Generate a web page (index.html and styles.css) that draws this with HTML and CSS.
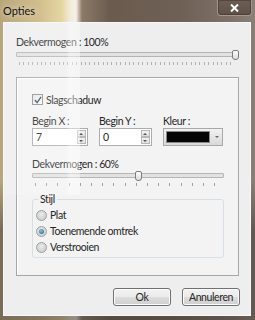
FILE: index.html
```html
<!DOCTYPE html>
<html>
<head>
<meta charset="utf-8">
<link rel="stylesheet" href="styles.css">
</head>
<body>
<div class="window">
  <div class="titlebar">
    <span class="title">Opties</span>
    <span class="close">
      <svg width="9" height="8" viewBox="0 0 9 8"><path d="M1 0.5 L8 7.5 M8 0.5 L1 7.5" stroke="#fff" stroke-width="2"/></svg>
    </span>
  </div>
  <div class="client">
    <div class="label top-label">Dekvermogen : 100%</div>
    <div class="slider wide">
      <div class="track"></div>
      <div class="thumb" style="left: 216px"></div>
      <div class="ticks fine"></div>
    </div>

    <div class="panel">
      <label class="check">
        <span class="box">
          <svg width="9" height="9" viewBox="0 0 9 9"><path d="M1 4.5 L3.5 7.5 L8 1" stroke="#3b4b68" stroke-width="1.6" fill="none"/></svg>
        </span>
        <span class="label">Slagschaduw</span>
      </label>

      <div class="fields">
        <div class="field">
          <div class="label">Begin X :</div>
          <div class="spin">
            <span class="val">7</span>
            <span class="arrows"><span class="up"></span><span class="down"></span></span>
          </div>
        </div>
        <div class="field">
          <div class="label">Begin Y :</div>
          <div class="spin short">
            <span class="val">0</span>
            <span class="arrows"><span class="up"></span><span class="down"></span></span>
          </div>
        </div>
        <div class="field">
          <div class="label">Kleur :</div>
          <div class="combo">
            <span class="swatch"></span>
            <span class="drop"></span>
          </div>
        </div>
      </div>

      <div class="label mid-label">Dekvermogen : 60%</div>
      <div class="slider narrow">
        <div class="track"></div>
        <div class="thumb" style="left: 103px"></div>
        <div class="ticks coarse"></div>
      </div>

      <fieldset class="group">
        <legend class="label">Stijl</legend>
        <label class="radio"><span class="dot"></span><span class="label">Plat</span></label>
        <label class="radio on"><span class="dot"></span><span class="label">Toenemende omtrek</span></label>
        <label class="radio"><span class="dot"></span><span class="label">Verstrooien</span></label>
      </fieldset>
    </div>

    <div class="buttons">
      <span class="btn">Ok</span>
      <span class="btn">Annuleren</span>
    </div>
  </div>
</div>
</body>
</html>
```
FILE: styles.css
```css
*, *::before, *::after {
  box-sizing: border-box;
}
html, body {
  margin: 0;
  padding: 0;
}
body {
  width: 255px;
  height: 320px;
  overflow: hidden;
  font-family: "Lato", "Noto Sans", sans-serif;
  font-size: 10.5px;
  letter-spacing: -0.4px;
  color: #262626;
}
.window {
  width: 255px;
  height: 320px;
  display: flex;
  flex-direction: column;
  background:
    linear-gradient(to bottom, rgba(0,0,0,0) 0, rgba(0,0,0,0) 180px, rgba(70,60,55,0.55) 230px),
    linear-gradient(to right, #b9a57a 0, #d2bf8f 40px, #e6d6a4 62px, #f1ecd8 70px, #f4f0e8 76px, #8c7a68 82px, #6b5b4f 110px, #6f6055 180px, #7e7168 230px, #8a8078 255px);
}
.titlebar {
  height: 22px;
  flex: none;
  display: flex;
  justify-content: space-between;
  align-items: flex-start;
  padding: 0 3px 0 3px;
}
.title {
  margin-top: 4px;
  font-size: 11px;
  letter-spacing: 0;
  color: #111;
  text-shadow: 0 0 6px rgba(255,255,240,0.9);
}
.close {
  width: 35px;
  height: 16px;
  border: 1px solid rgba(220,210,200,0.5);
  border-top: none;
  border-radius: 0 0 4px 4px;
  background: linear-gradient(#6d5e53, #5f5148);
  box-shadow: inset 0 0 0 1px rgba(40,30,25,0.35);
  display: flex;
  align-items: center;
  justify-content: center;
  padding-top: 1px;
}
.client {
  flex: 1;
  width: 248px;
  margin: 0 4px 4px 3px;
  background: #eeeeee;
  border: 1px solid #f8f8f8;
  display: flex;
  flex-direction: column;
  align-items: flex-start;
  padding: 12px 10px 0 12px;
  position: relative;
}
.client::before {
  content: "";
  position: absolute;
  left: 0;
  top: 0;
  width: 76px;
  height: 172px;
  background: linear-gradient(to right, rgba(255,255,255,0.12) 0, rgba(255,255,255,0.2) 62px, rgba(255,255,255,0.5) 66px, rgba(255,255,255,0.4) 75px);
  pointer-events: none;
  z-index: 2;
}
.label {
  line-height: 14px;
  white-space: nowrap;
}
.slider {
  position: relative;
  height: 17px;
  flex: none;
}
.slider.wide {
  margin-top: 1px;
  width: 222px;
}
.slider.narrow {
  width: 192px;
}
.track {
  position: absolute;
  left: 0;
  right: 0;
  top: 2px;
  height: 5px;
  border: 1px solid #b5b5b5;
  border-radius: 1px;
  background: #e2e2e2;
}
.thumb {
  position: absolute;
  top: 0;
  width: 7px;
  height: 10px;
  border: 1px solid #7c7c7c;
  border-radius: 2px 2px 3px 3px;
  background: linear-gradient(#fcfcfc, #dcdcdc);
}
.ticks {
  position: absolute;
  left: 3px;
  right: 3px;
  top: 12px;
  height: 3px;
}
.ticks.fine {
  background: repeating-linear-gradient(to right, #b0b0b0 0, #b0b0b0 1px, transparent 1px, transparent 4.4px);
}
.ticks.coarse {
  background: repeating-linear-gradient(to right, #a0a0a0 0, #a0a0a0 1px, transparent 1px, transparent 11.2px);
}
.panel {
  margin-top: 10px;
  width: 223px;
  height: 199px;
  flex: none;
  border: 1px solid #a6a6a6;
  background: #f3f3f3;
  box-shadow: inset 1px 1px 0 #ffffff;
  padding: 15px 0 0 15px;
  display: flex;
  flex-direction: column;
  align-items: flex-start;
}
.check {
  display: flex;
  align-items: center;
  gap: 3px;
  height: 13px;
}
.box {
  width: 11px;
  height: 11px;
  border: 1px solid #8e8f8f;
  background: linear-gradient(135deg, #e5e5e5, #fbfbfb);
  display: flex;
  align-items: center;
  justify-content: center;
}
.box svg {
  width: 8px;
  height: 8px;
}
.fields {
  display: flex;
  margin-top: 8px;
  gap: 11px;
}
.field {
  display: flex;
  flex-direction: column;
}
.spin {
  width: 56px;
  height: 18px;
  border: 1px solid #abadb3;
  background: #fff;
  display: flex;
  justify-content: space-between;
  align-items: stretch;
}
.spin.short {
  width: 53px;
}
.val {
  padding-left: 3px;
  line-height: 16px;
}
.arrows {
  width: 9px;
  margin: 1px;
  display: flex;
  flex-direction: column;
}
.arrows span {
  flex: 1;
  border: 1px solid #b8b8b8;
  background: linear-gradient(#f4f4f4, #dedede);
  position: relative;
}
.arrows .up::after, .arrows .down::after {
  content: "";
  position: absolute;
  left: 1px;
  border-left: 2.5px solid transparent;
  border-right: 2.5px solid transparent;
}
.arrows .up::after {
  top: 2px;
  border-bottom: 2px solid #555;
}
.arrows .down::after {
  top: 2px;
  border-top: 2px solid #555;
}
.combo {
  width: 60px;
  height: 18px;
  border: 1px solid #a8a8a8;
  background: linear-gradient(#f2f2f2, #d8d8d8);
  display: flex;
  padding: 2px;
  gap: 2px;
}
.swatch {
  width: 44px;
  background: #050505;
  border: 1px solid #888;
}
.drop {
  flex: 1;
  position: relative;
}
.drop::after {
  content: "";
  position: absolute;
  left: 3px;
  top: 5px;
  border-left: 2.5px solid transparent;
  border-right: 2.5px solid transparent;
  border-top: 2.5px solid #666;
}
.mid-label {
  margin-top: 11px;
}
.group {
  margin: 4px 0 0 0;
  width: 192px;
  min-width: 0;
  height: 66px;
  flex: none;
  border: 1px solid #d5dfe5;
  border-radius: 3px;
  padding: 1px 0 0 3px;
  display: flex;
  flex-direction: column;
}
.group legend {
  padding: 0 2px;
  margin-left: 2px;
}
.radio {
  display: flex;
  align-items: center;
  gap: 3px;
  height: 16px;
}
.dot {
  width: 11px;
  height: 11px;
  border-radius: 50%;
  border: 1px solid #a0a0a0;
  background: radial-gradient(circle at 50% 40%, #ececec, #c4c4c4);
  display: flex;
  align-items: center;
  justify-content: center;
}
.radio.on .dot::after {
  content: "";
  width: 5px;
  height: 5px;
  border-radius: 50%;
  background: radial-gradient(circle at 40% 35%, #7fc4e8, #1f5f86);
}
.buttons {
  display: flex;
  justify-content: flex-end;
  gap: 11px;
  margin-top: 12px;
  width: 224px;
}
.btn {
  width: 58px;
  height: 18px;
  border: 1px solid #707070;
  border-radius: 3px;
  background: linear-gradient(#f2f2f2 0, #ebebeb 50%, #dddddd 50%, #cfcfcf 100%);
  box-shadow: inset 0 0 0 1px #fcfcfc;
  display: flex;
  align-items: center;
  justify-content: center;
  line-height: 14px;
}
```
